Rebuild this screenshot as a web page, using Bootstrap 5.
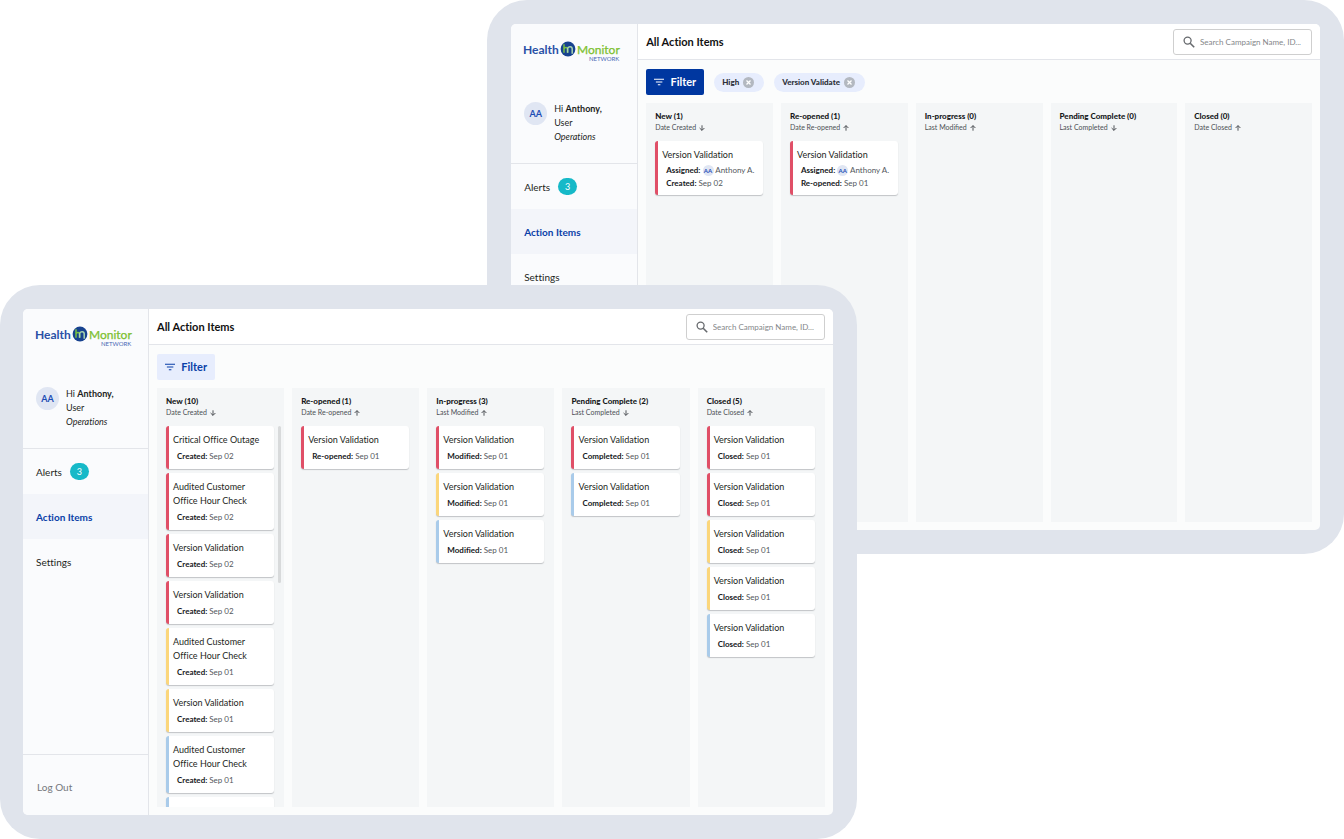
<!DOCTYPE html>
<html lang="en">
<head>
<meta charset="utf-8">
<meta name="viewport" content="width=device-width, initial-scale=1">
<title>Health Monitor Network – Action Items</title>
<link href="https://cdn.jsdelivr.net/npm/bootstrap@5.3.0/dist/css/bootstrap.min.css" rel="stylesheet">
<style>
  :root { --brand: #0a3fa8; --edge: #e3e5ea; }
  body { font-family: Lato, "Liberation Sans", sans-serif; font-size: 10px; line-height: 14px; color: #1d1f22; background: #fff; font-variant-ligatures: none; }
  a { text-decoration: none; color: inherit; }
  b { font-weight: 700; }

  /* Two overlapping devices share one grid cell */
  .stage { display: grid; min-height: 100vh; overflow: hidden; }
  .device { grid-area: 1 / 1; isolation: isolate; width: 63.75%; height: 66vh; min-height: 480px; padding: 24px; border-radius: 40px; background: #e0e4ec; }
  .device-back { justify-self: end; align-self: start; z-index: 1; }
  .device-front { justify-self: start; align-self: end; z-index: 2; padding-left: 23px; }
  .screen { border-radius: 5px; background: #fbfcfc; }

  .side { flex: 0 0 126px; background: #fafbfd; border-right: 1px solid var(--edge); }
  .device-back .side { flex-basis: 127px; }
  .brand { height: 58px; padding: 17px 0 0 12px; }
  .user { height: 82px; padding: 20px 0 0 13px; gap: 7px; border-bottom: 1px solid var(--edge); font-size: 9px; }
  .avatar { width: 23px; height: 23px; border-radius: 50%; background: #e0e6f3; color: #1c4db5; font-size: 9px; font-weight: 700; }
  .side-link { height: 45px; padding: 0 13px; font-size: 10px; }
  .side-link.active { background: #f3f5fa; color: var(--brand); font-weight: 700; }
  .count { width: 19px; height: 17px; border-radius: 9px; background: #16b9c8; color: #fff; font-size: 9px; }
  .logout { height: 61px; padding: 4px 14px 0; border-top: 1px solid var(--edge); color: #74777c; }

  .top { flex: 0 0 36px; padding: 0 8px; background: #fff; border-bottom: 1px solid var(--edge); }
  .top h1 { font-size: 11px; line-height: 14px; font-weight: 700; color: #111; }
  .search { width: 139px; height: 26px; padding: 0 4px 0 9px; gap: 5px; border: 1px solid #cfcfcf; border-radius: 3px; background: #fff; }
  .search input { width: 100%; min-width: 0; padding: 0; border: 0; outline: 0; background: none; font-size: 8px; color: #555; }
  .search input::placeholder { color: #85878a; opacity: 1; }

  .tools { padding: 9px 8px 8px; gap: 10px; }
  .btn-filter { --bs-btn-padding-x: 8px; --bs-btn-padding-y: 0; --bs-btn-font-size: 11px; --bs-btn-border-radius: 2px; --bs-btn-border-width: 0;
    --bs-btn-bg: #e7edfd; --bs-btn-color: #0a3fa8; --bs-btn-hover-bg: #d9e3fb; --bs-btn-hover-color: #0a3fa8; width: 58px; height: 26px; gap: 6px; line-height: 14px; font-weight: 700; }
  .btn-filter.applied { --bs-btn-bg: #0037a0; --bs-btn-color: #fff; --bs-btn-hover-bg: #002f88; --bs-btn-hover-color: #fff; }
  .chip { height: 19px; padding: 0 10px 0 8px; gap: 4px; border-radius: 10px; background: #e7edfd; font-size: 8px; font-weight: 900; color: #2c3038; }
  .chip button { width: 11px; height: 11px; padding: 0; border: 0; background: none; line-height: 0; }

  .board { padding: 0 8px 8px; gap: 8px; min-height: 0; }
  .lane { flex: 1 1 0; min-width: 0; min-height: 0; padding: 7px 10px 0 9px; background: #f4f6f7; overflow: hidden; position: relative; }
  .lane h2 { margin: 0; font-size: 8px; line-height: 12px; font-weight: 900; color: #16181a; }
  .sort { padding: 0; border: 0; background: none; font-size: 7px; line-height: 11px; color: #4c5055; gap: 3px; }
  .stack { margin-top: 8px; gap: 4px; }
  .task { flex: none; padding: 7px 4px 6px 4px; border-left: 3px solid #e04f67; border-radius: 3px; background: #fff; box-shadow: 0 1px 1px rgba(40, 44, 52, .25); }
  .task.medium { border-left-color: #fbd67b; }
  .task.low { border-left-color: #a9cbea; }
  .task.detailed { padding-bottom: 5px; }
  .task h3 { margin: 0 0 3px; font-size: 9px; line-height: 14px; font-weight: 400; color: #1d1f22; }
  .task.detailed h3 { margin-bottom: 2px; }
  .task p { margin: 0 0 0 4px; font-size: 8px; line-height: 13px; color: #54585d; white-space: nowrap; }
  .task p b { color: #15171a; }
  .mini { display: inline-block; width: 11px; border-radius: 50%; background: #e0e6f3; color: #1c4db5; font-size: 6px; line-height: 11px; font-weight: 700; text-align: center; }
  .thumb { position: absolute; top: 38px; right: 3px; width: 3px; height: 157px; border-radius: 2px; background: #d8dadb; }
</style>
</head>
<body>
<svg class="d-none" aria-hidden="true">
  <symbol id="logo" viewBox="0 0 100 25">
    <g font-family="Lato, sans-serif">
      <text x="0" y="13" font-size="12" font-weight="700" fill="#2a50a6">Health</text>
      <text x="54" y="13" font-size="12" fill="#7cc02f" stroke="#7cc02f" stroke-width=".25">Monitor</text>
      <text x="66" y="20" font-size="6" fill="#4a67b5">NETWORK</text>
    </g>
    <circle cx="45" cy="8" r="7.400" fill="#17428f"/>
    <path d="M41 3.200v8.600M41 8.200c.4-2.400 3.600-2.400 3.600.2v3.400" fill="none" stroke="#78c143" stroke-width="1.500"/>
    <path d="M44.600 11.800V7.600c.4-2.600 4.600-2.600 4.600.2v5" fill="none" stroke="#a9d7b0" stroke-width="1.500"/>
  </symbol>
  <symbol id="lens" viewBox="0 0 12 12"><circle cx="4.600" cy="4.600" r="3.500" fill="none" stroke="#66696d" stroke-width="1.300"/><path d="M7.200 7.200l4 4" stroke="#66696d" stroke-width="1.600"/></symbol>
  <symbol id="funnel" viewBox="0 0 12 8"><path d="M0 .8h12M2.200 4h7.600M4.500 7.200h3" stroke="currentColor" stroke-width="1.300"/></symbol>
  <symbol id="down" viewBox="0 0 6 6"><path d="M3 .3v5M.6 3L3 5.400 5.400 3" fill="none" stroke="#3d4146" stroke-width=".9"/></symbol>
  <symbol id="up" viewBox="0 0 6 6"><path d="M3 5.700v-5M.6 3L3 .6 5.400 3" fill="none" stroke="#3d4146" stroke-width=".9"/></symbol>
  <symbol id="clear" viewBox="0 0 11 11"><circle cx="5.500" cy="5.500" r="5.500" fill="#b3b8c0"/><path d="M3.500 3.500l4 4M7.500 3.500l-4 4" stroke="#fff" stroke-width="1.300"/></symbol>
</svg>

<main class="stage">
  <section class="device device-back" aria-label="Filtered action items">
    <div class="screen d-flex h-100 overflow-hidden">
      <aside class="side d-flex flex-column">
        <div class="brand"><svg width="100" height="25" role="img" aria-label="Health Monitor Network"><use href="#logo"/></svg></div>
        <div class="user d-flex align-items-start">
          <span class="avatar d-flex align-items-center justify-content-center">AA</span>
          <div>Hi <b>Anthony,</b><br>User<br><i>Operations</i></div>
        </div>
        <nav class="d-flex flex-column">
          <a href="#" class="side-link d-flex align-items-center gap-2">Alerts <span class="count d-flex align-items-center justify-content-center">3</span></a>
          <a href="#" class="side-link active d-flex align-items-center" aria-current="page">Action Items</a>
          <a href="#" class="side-link d-flex align-items-center">Settings</a>
        </nav>
      </aside>
      <div class="d-flex flex-column flex-grow-1 overflow-hidden">
        <header class="top d-flex align-items-center justify-content-between">
          <h1 class="m-0">All Action Items</h1>
          <label class="search d-flex align-items-center"><svg width="12" height="12" class="flex-shrink-0"><use href="#lens"/></svg><input type="text" aria-label="Search" placeholder="Search Campaign Name, ID..."></label>
        </header>
        <div class="tools d-flex align-items-center">
          <button type="button" class="btn btn-filter applied d-flex align-items-center"><svg width="12" height="8"><use href="#funnel"/></svg>Filter</button>
          <span class="chip d-flex align-items-center">High <button type="button" aria-label="Remove High"><svg width="11" height="11"><use href="#clear"/></svg></button></span>
          <span class="chip d-flex align-items-center">Version Validate <button type="button" aria-label="Remove Version Validate"><svg width="11" height="11"><use href="#clear"/></svg></button></span>
        </div>
        <div class="board d-flex flex-grow-1">
          <section class="lane"><h2>New (1)</h2><button type="button" class="sort d-flex align-items-center">Date Created <svg width="6" height="6"><use href="#down"/></svg></button>
            <div class="stack d-flex flex-column">
              <article class="task detailed"><h3>Version Validation</h3><p><b>Assigned:</b> <span class="mini">AA</span> Anthony A.</p><p><b>Created:</b> Sep 02</p></article>
            </div></section>
          <section class="lane"><h2>Re-opened (1)</h2><button type="button" class="sort d-flex align-items-center">Date Re-opened <svg width="6" height="6"><use href="#up"/></svg></button>
            <div class="stack d-flex flex-column">
              <article class="task detailed"><h3>Version Validation</h3><p><b>Assigned:</b> <span class="mini">AA</span> Anthony A.</p><p><b>Re-opened:</b> Sep 01</p></article>
            </div></section>
          <section class="lane"><h2>In-progress (0)</h2><button type="button" class="sort d-flex align-items-center">Last Modified <svg width="6" height="6"><use href="#up"/></svg></button></section>
          <section class="lane"><h2>Pending Complete (0)</h2><button type="button" class="sort d-flex align-items-center">Last Completed <svg width="6" height="6"><use href="#down"/></svg></button></section>
          <section class="lane"><h2>Closed (0)</h2><button type="button" class="sort d-flex align-items-center">Date Closed <svg width="6" height="6"><use href="#up"/></svg></button></section>
        </div>
      </div>
    </div>
  </section>

  <section class="device device-front" aria-label="All action items">
    <div class="screen d-flex h-100 overflow-hidden">
      <aside class="side d-flex flex-column">
        <div class="brand"><svg width="100" height="25" role="img" aria-label="Health Monitor Network"><use href="#logo"/></svg></div>
        <div class="user d-flex align-items-start">
          <span class="avatar d-flex align-items-center justify-content-center">AA</span>
          <div>Hi <b>Anthony,</b><br>User<br><i>Operations</i></div>
        </div>
        <nav class="d-flex flex-column">
          <a href="#" class="side-link d-flex align-items-center gap-2">Alerts <span class="count d-flex align-items-center justify-content-center">3</span></a>
          <a href="#" class="side-link active d-flex align-items-center" aria-current="page">Action Items</a>
          <a href="#" class="side-link d-flex align-items-center">Settings</a>
        </nav>
        <a href="#" class="logout side-link d-flex align-items-center mt-auto">Log Out</a>
      </aside>
      <div class="d-flex flex-column flex-grow-1 overflow-hidden">
        <header class="top d-flex align-items-center justify-content-between">
          <h1 class="m-0">All Action Items</h1>
          <label class="search d-flex align-items-center"><svg width="12" height="12" class="flex-shrink-0"><use href="#lens"/></svg><input type="text" aria-label="Search" placeholder="Search Campaign Name, ID..."></label>
        </header>
        <div class="tools d-flex align-items-center">
          <button type="button" class="btn btn-filter d-flex align-items-center"><svg width="12" height="8"><use href="#funnel"/></svg>Filter</button>
        </div>
        <div class="board d-flex flex-grow-1">
          <section class="lane"><h2>New (10)</h2><button type="button" class="sort d-flex align-items-center">Date Created <svg width="6" height="6"><use href="#down"/></svg></button>
            <div class="stack d-flex flex-column">
              <article class="task"><h3>Critical Office Outage</h3><p><b>Created:</b> Sep 02</p></article>
              <article class="task"><h3>Audited Customer<br>Office Hour Check</h3><p><b>Created:</b> Sep 02</p></article>
              <article class="task"><h3>Version Validation</h3><p><b>Created:</b> Sep 02</p></article>
              <article class="task"><h3>Version Validation</h3><p><b>Created:</b> Sep 02</p></article>
              <article class="task medium"><h3>Audited Customer<br>Office Hour Check</h3><p><b>Created:</b> Sep 01</p></article>
              <article class="task medium"><h3>Version Validation</h3><p><b>Created:</b> Sep 01</p></article>
              <article class="task low"><h3>Audited Customer<br>Office Hour Check</h3><p><b>Created:</b> Sep 01</p></article>
              <article class="task low"><h3>&nbsp;</h3><p>&nbsp;</p></article>
            </div><span class="thumb"></span></section>
          <section class="lane"><h2>Re-opened (1)</h2><button type="button" class="sort d-flex align-items-center">Date Re-opened <svg width="6" height="6"><use href="#up"/></svg></button>
            <div class="stack d-flex flex-column">
              <article class="task"><h3>Version Validation</h3><p><b>Re-opened:</b> Sep 01</p></article>
            </div></section>
          <section class="lane"><h2>In-progress (3)</h2><button type="button" class="sort d-flex align-items-center">Last Modified <svg width="6" height="6"><use href="#up"/></svg></button>
            <div class="stack d-flex flex-column">
              <article class="task"><h3>Version Validation</h3><p><b>Modified:</b> Sep 01</p></article>
              <article class="task medium"><h3>Version Validation</h3><p><b>Modified:</b> Sep 01</p></article>
              <article class="task low"><h3>Version Validation</h3><p><b>Modified:</b> Sep 01</p></article>
            </div></section>
          <section class="lane"><h2>Pending Complete (2)</h2><button type="button" class="sort d-flex align-items-center">Last Completed <svg width="6" height="6"><use href="#down"/></svg></button>
            <div class="stack d-flex flex-column">
              <article class="task"><h3>Version Validation</h3><p><b>Completed:</b> Sep 01</p></article>
              <article class="task low"><h3>Version Validation</h3><p><b>Completed:</b> Sep 01</p></article>
            </div></section>
          <section class="lane"><h2>Closed (5)</h2><button type="button" class="sort d-flex align-items-center">Date Closed <svg width="6" height="6"><use href="#up"/></svg></button>
            <div class="stack d-flex flex-column">
              <article class="task"><h3>Version Validation</h3><p><b>Closed:</b> Sep 01</p></article>
              <article class="task"><h3>Version Validation</h3><p><b>Closed:</b> Sep 01</p></article>
              <article class="task medium"><h3>Version Validation</h3><p><b>Closed:</b> Sep 01</p></article>
              <article class="task medium"><h3>Version Validation</h3><p><b>Closed:</b> Sep 01</p></article>
              <article class="task low"><h3>Version Validation</h3><p><b>Closed:</b> Sep 01</p></article>
            </div></section>
        </div>
      </div>
    </div>
  </section>
</main>
<script src="https://cdn.jsdelivr.net/npm/bootstrap@5.3.0/dist/js/bootstrap.bundle.min.js"></script>
</body>
</html>
